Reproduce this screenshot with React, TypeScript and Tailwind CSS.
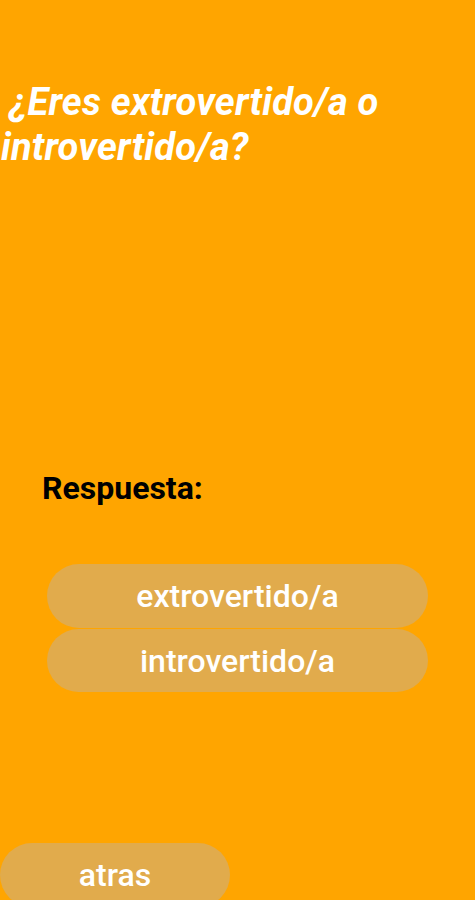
import React from "react";

export default function App() {
  return (
    <div
      className="w-[475px] h-[900px] bg-[#FFA500] flex flex-col overflow-hidden"
      style={{ fontFamily: "Roboto, 'Liberation Sans', sans-serif" }}
    >
      <h1 className="mt-[80px] pl-[1px] text-white italic font-bold text-[38px] leading-[45px] tracking-[0.2px] whitespace-nowrap">
        <span className="pl-[8px]">¿Eres extrovertido/a o</span>
        <br />
        introvertido/a?
      </h1>
      <div className="mt-[302px] pl-[42px] text-black font-bold text-[32px] leading-[32px]">Respuesta:</div>
      <div className="mt-[60px] flex flex-col gap-[1px] pl-[47px] pr-[47px]">
        <button className="h-[64px] rounded-full bg-[#E1AB4C] text-white font-medium text-[32px]">
          extrovertido/a
        </button>
        <button className="h-[63px] rounded-full bg-[#E1AB4C] text-white font-medium text-[32px]">
          introvertido/a
        </button>
      </div>
      <div className="mt-[151px]">
        <button className="w-[230px] h-[64px] rounded-full bg-[#E1AB4C] text-white font-medium text-[32px]">
          atras
        </button>
      </div>
    </div>
  );
}
